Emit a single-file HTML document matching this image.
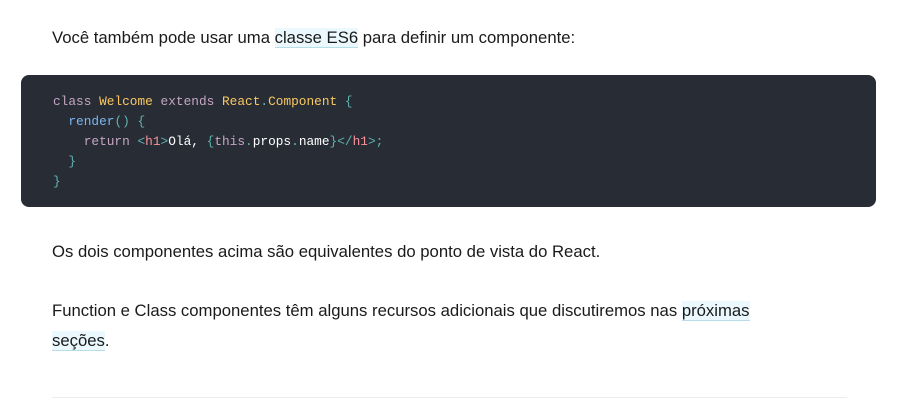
<!DOCTYPE html>
<html><head><meta charset="utf-8"><style>
body{margin:0;width:900px;height:400px;background:#fff;overflow:hidden;font-family:"Liberation Sans",sans-serif;color:#1a1a1a;font-size:16.7px}
p{position:absolute;left:52px;margin:0;line-height:30px;width:720px}
a{background:#ebf9ff;border-bottom:1px solid #b7dde9;color:#1a1a1a;text-decoration:none}
pre{position:absolute;left:21px;top:75px;width:855px;height:132px;margin:0;background:#282c34;border-radius:8px;box-sizing:border-box;padding:17px 32px;font-family:"Liberation Mono",monospace;font-size:12.8px;line-height:20px;color:#fff}
.k{color:#c5a5c5}.y{color:#fac863}.c{color:#5fb3b3}.b{color:#79b6f2}.t{color:#fc929e}
hr{position:absolute;left:52px;top:397px;width:795px;margin:0;border:0;border-top:1px solid #ececec}
</style></head><body>
<p style="top:23px">Você também pode usar uma <a>classe ES6</a> para definir um componente:</p>
<pre><span class="k">class</span> <span class="y">Welcome</span> <span class="k">extends</span> <span class="y">React</span><span class="c">.</span><span class="y">Component</span> <span class="c">{</span>
  <span class="b">render</span><span class="c">()</span> <span class="c">{</span>
    <span class="k">return</span> <span class="c">&lt;</span><span class="t">h1</span><span class="c">&gt;</span>Olá, <span class="c">{</span><span class="k">this</span><span class="c">.</span>props<span class="c">.</span>name<span class="c">}</span><span class="c">&lt;/</span><span class="t">h1</span><span class="c">&gt;</span><span class="c">;</span>
  <span class="c">}</span>
<span class="c">}</span></pre>
<p style="top:237px">Os dois componentes acima são equivalentes do ponto de vista do React.</p>
<p style="top:296px">Function e Class componentes têm alguns recursos adicionais que discutiremos nas <a>próximas</a> <a>seções</a>.</p>
<hr>
</body></html>
